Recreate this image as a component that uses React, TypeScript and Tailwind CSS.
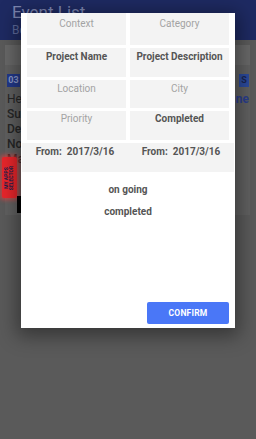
import React from "react";

function Cell({ text, bold, h, pt = "pt-[4px]" }: { text: string; bold?: boolean; h: string; pt?: string }) {
  return (
    <div className={`flex-1 bg-[#f3f3f3] ${h} ${pt} text-center text-[10px] leading-[12px] ${bold ? "font-bold text-[#555555]" : "text-[#a3a3a3]"}`}>
      {text}
    </div>
  );
}

export default function App() {
  return (
    <div
      className="relative w-[256px] h-[439px] overflow-hidden bg-[#5a5a5a]"
      style={{ fontFamily: "Roboto, 'Liberation Sans', sans-serif" }}
    >
      {/* background page (dimmed) */}
      <div className="flex flex-col">
        <div className="h-[40px] bg-[#1e2a62] px-[12px] pt-[2px] flex flex-col">
          <div className="text-[17px] leading-[20px] text-[#7e87b2]">Event List</div>
          <div className="text-[12px] leading-[16px] text-[#5f6a9c]">Bob</div>
        </div>
        <div className="h-[5px]" />
        <div className="mx-[5px] mr-[6px] h-[20px] bg-[#686868]" />
        <div className="flex">
          <div className="ml-[5px] w-[245px] h-[150px] bg-[#606060] pt-[9px] pl-[2px] pr-[1px] flex flex-col">
            <div className="flex justify-between">
              <div className="w-[13px] h-[13px] bg-[#22398a] text-[9px] leading-[13px] font-bold text-[#8d9bc9] text-center">03</div>
              <div className="w-[10px] h-[13px] bg-[#2b4a9c] text-[9px] leading-[13px] font-bold text-[#1a2550] text-center">S</div>
            </div>
            <div className="flex justify-between mt-[5px] text-[12px] leading-[15px]">
              <span className="text-[#262626]">Hello</span>
              <span className="text-[#2a3e8c] font-bold">ne</span>
            </div>
            <div className="text-[12px] leading-[15px] text-[#262626] font-medium">Subject</div>
            <div className="text-[12px] leading-[15px] text-[#262626] font-medium">Detail</div>
            <div className="text-[12px] leading-[15px] text-[#262626] font-medium">Note</div>
            <div className="text-[12px] leading-[15px] text-[#262626] font-medium">Map</div>
          </div>
        </div>
      </div>

      {/* floating badge */}
      <div className="absolute left-[2px] top-[157px] w-[15px] h-[41px] bg-[#e8262b] rounded-[2px] shadow-[0_0_4px_2px_rgba(255,60,60,0.6)] flex items-center justify-center">
        <div className="-rotate-90 whitespace-nowrap text-[5px] leading-[5px] font-bold text-[#1b1f4a] text-center">
          MY APPS
          <br />
          SELECTOR
        </div>
      </div>
      <div className="absolute left-[17px] top-[196px] w-[4px] h-[17px] bg-black" />

      {/* modal */}
      <div className="absolute left-[21px] top-[13px] w-[214px] h-[315px] bg-white shadow-[0_4px_18px_4px_rgba(0,0,0,0.4)] flex flex-col">
        <div className="flex flex-col gap-[3px]">
          <div className="flex gap-[4px] px-[6px]">
            <Cell text="Context" h="h-[32px]" pt="pt-[5px]" />
            <Cell text="Category" h="h-[32px]" pt="pt-[5px]" />
          </div>
          <div className="flex gap-[4px] px-[6px]">
            <Cell text="Project Name" bold h="h-[29px]" pt="pt-[3px]" />
            <Cell text="Project Description" bold h="h-[29px]" pt="pt-[3px]" />
          </div>
          <div className="flex gap-[4px] px-[6px]">
            <Cell text="Location" h="h-[28px]" pt="pt-[3px]" />
            <Cell text="City" h="h-[28px]" pt="pt-[3px]" />
          </div>
          <div className="flex gap-[4px] px-[6px]">
            <Cell text="Priority" h="h-[29px]" pt="pt-[2px]" />
            <Cell text="Completed" bold h="h-[29px]" pt="pt-[2px]" />
          </div>
          <div className="flex mx-[1px] bg-[#f3f3f3] h-[29px] pt-[3px]">
            <div className="flex-1 text-center text-[10px] leading-[12px] font-bold text-[#555555] whitespace-pre">From:  2017/3/16</div>
            <div className="flex-1 text-center text-[10px] leading-[12px] font-bold text-[#555555] whitespace-pre">From:  2017/3/16</div>
          </div>
        </div>
        <div className="mt-[12px] text-center text-[10px] leading-[12px] font-bold text-[#555555]">on going</div>
        <div className="mt-[10px] text-center text-[10px] leading-[12px] font-bold text-[#555555]">completed</div>
        <div className="flex-1" />
        <div className="flex justify-end px-[6px] pb-[4px]">
          <button className="w-[82px] h-[22px] bg-[#4a77f7] rounded-[2px] text-white text-[8.5px] font-bold tracking-[0.2px]">
            CONFIRM
          </button>
        </div>
      </div>
    </div>
  );
}
